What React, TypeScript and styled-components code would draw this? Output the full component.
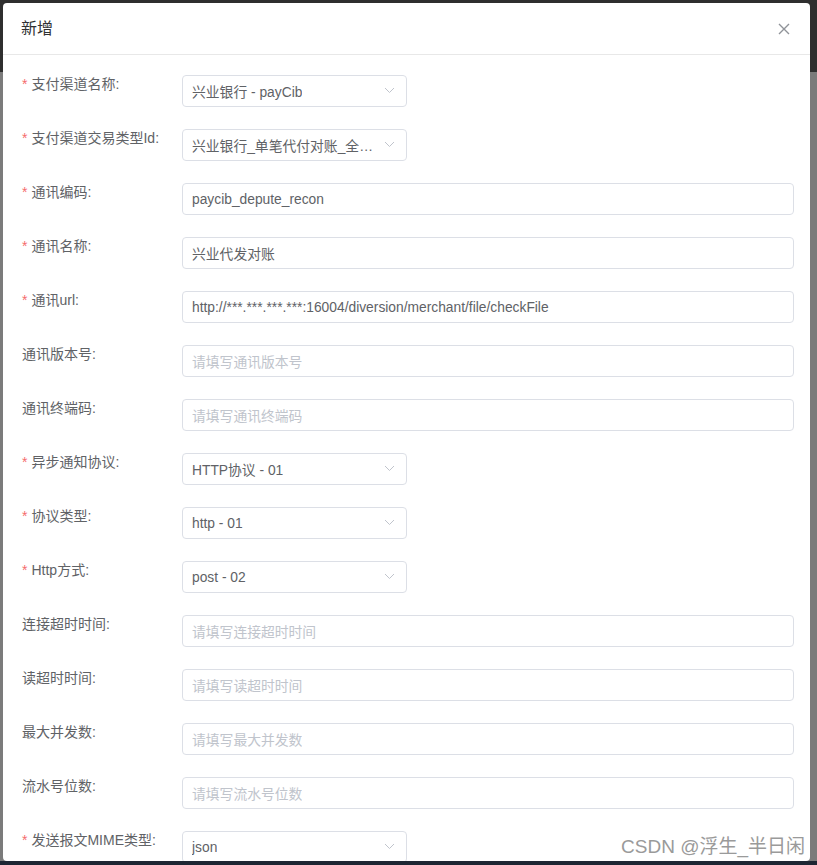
import React, { FC } from 'react';
import styled, { createGlobalStyle } from 'styled-components';

interface FieldInterface {
    label: string;
    required?: boolean;
    kind: 'select' | 'input';
    value?: string;
    placeholder?: string;
}

const FIELDS: Array<FieldInterface> = [
    { label: '支付渠道名称', required: true, kind: 'select', value: '兴业银行 - payCib' },
    { label: '支付渠道交易类型Id', required: true, kind: 'select', value: '兴业银行_单笔代付对账_全部_全部' },
    { label: '通讯编码', required: true, kind: 'input', value: 'paycib_depute_recon' },
    { label: '通讯名称', required: true, kind: 'input', value: '兴业代发对账' },
    { label: '通讯url', required: true, kind: 'input', value: 'http://***.***.***.***:16004/diversion/merchant/file/checkFile' },
    { label: '通讯版本号', kind: 'input', placeholder: '请填写通讯版本号' },
    { label: '通讯终端码', kind: 'input', placeholder: '请填写通讯终端码' },
    { label: '异步通知协议', required: true, kind: 'select', value: 'HTTP协议 - 01' },
    { label: '协议类型', required: true, kind: 'select', value: 'http - 01' },
    { label: 'Http方式', required: true, kind: 'select', value: 'post - 02' },
    { label: '连接超时时间', kind: 'input', placeholder: '请填写连接超时时间' },
    { label: '读超时时间', kind: 'input', placeholder: '请填写读超时时间' },
    { label: '最大并发数', kind: 'input', placeholder: '请填写最大并发数' },
    { label: '流水号位数', kind: 'input', placeholder: '请填写流水号位数' },
    { label: '发送报文MIME类型', required: true, kind: 'select', value: 'json' },
];

const GlobalStyle = createGlobalStyle`
    html, body {
        margin: 0;
        padding: 0;
        height: 865px;
        overflow: hidden;
    }
    body {
        font-family: "Liberation Sans", "Noto Sans CJK SC", sans-serif;
    }
`;

let Page = styled.div`
    height: 865px;
    display: flex;
    flex-direction: column;
    overflow: hidden;
    position: relative;
`;

let Overlay = styled.div`
    flex: 1;
    min-height: 0;
    padding: 3px 7px 0 3px;
    background: linear-gradient(to bottom, #2f2f2f 0, #2f2f2f 72px, #7b7b7b 72px, #7b7b7b 100%);
    overflow: hidden;
`;

let TaskBar = styled.div`
    height: 4px;
    background: #1d2633;
`;

let Dialog = styled.div`
    background: #fff;
    border-radius: 4px;
    height: 100%;
    overflow: hidden;
`;

let Header = styled.div`
    height: 51px;
    padding: 0 19px 0 18px;
    display: flex;
    align-items: center;
    justify-content: space-between;
    border-bottom: 1px solid #e8e8e8;
`;

let Title = styled.span`
    font-size: 16px;
    color: #303133;
    padding-bottom: 3px;
`;

let CloseButton = styled.button`
    border: none;
    background: none;
    padding: 0;
    width: 14px;
    height: 14px;
    display: flex;
    align-items: center;
    justify-content: center;
    cursor: pointer;
`;

let Body = styled.div`
    padding: 20px 16px 0 19px;
    display: flex;
    flex-direction: column;
    gap: 22px;
`;

let FormItem = styled.div`
    display: grid;
    grid-template-columns: 160px 1fr;
    align-items: start;
`;

let Label = styled.label`
    font-size: 14px;
    line-height: 19px;
    color: #606266;
    white-space: nowrap;
`;

let Star = styled.span`
    color: #f56c6c;
    margin-right: 4px;
`;

let Box = styled.div<{ $select?: boolean }>`
    box-sizing: border-box;
    height: 32px;
    width: ${(p) => (p.$select ? '225px' : '100%')};
    border: 1px solid #dcdfe6;
    border-radius: 4px;
    padding: 0 24px 0 9px;
    display: flex;
    align-items: center;
    position: relative;
    font-size: 13.8px;
`;

let Value = styled.span<{ $placeholder?: boolean }>`
    color: ${(p) => (p.$placeholder ? '#c0c4cc' : '#606266')};
    white-space: nowrap;
    overflow: hidden;
    text-overflow: ellipsis;
`;

let Arrow = styled.span`
    position: absolute;
    right: 11px;
    top: 50%;
    margin-top: -4px;
    display: flex;
`;

let Watermark = styled.div`
    position: absolute;
    right: 12px;
    bottom: 7px;
    font-family: "Liberation Sans", "Noto Sans CJK SC", sans-serif;
    font-size: 19px;
    color: #9a9a9a;
    text-shadow: 0 0 2px #fff;
`;

let ChevronDown: FC = () => (
    <svg width="11" height="7" viewBox="0 0 11 7">
        <path d="M1 1 L5.5 5.5 L10 1" fill="none" stroke="#c0c4cc" strokeWidth="1" />
    </svg>
);

let FormRow: FC<{ field: FieldInterface }> = (props) => {
    const f = props.field;
    return (
        <FormItem>
            <Label>
                {f.required && <Star>*</Star>}
                {f.label}:
            </Label>
            <Box $select={f.kind === 'select'}>
                <Value $placeholder={!f.value}>{f.value || f.placeholder}</Value>
                {f.kind === 'select' && (
                    <Arrow>
                        <ChevronDown />
                    </Arrow>
                )}
            </Box>
        </FormItem>
    );
};

let App: FC = () => {
    return (
        <Page>
            <GlobalStyle />
            <Overlay>
                <Dialog>
                    <Header>
                        <Title>新增</Title>
                        <CloseButton aria-label="close">
                            <svg width="12" height="12" viewBox="0 0 12 12">
                                <path d="M1 1 L11 11 M11 1 L1 11" stroke="#909399" strokeWidth="1.4" />
                            </svg>
                        </CloseButton>
                    </Header>
                    <Body>
                        {FIELDS.map((field) => (
                            <FormRow key={field.label} field={field} />
                        ))}
                    </Body>
                </Dialog>
            </Overlay>
            <TaskBar />
            <Watermark>CSDN @浮生_半日闲</Watermark>
        </Page>
    );
};

export default App;
